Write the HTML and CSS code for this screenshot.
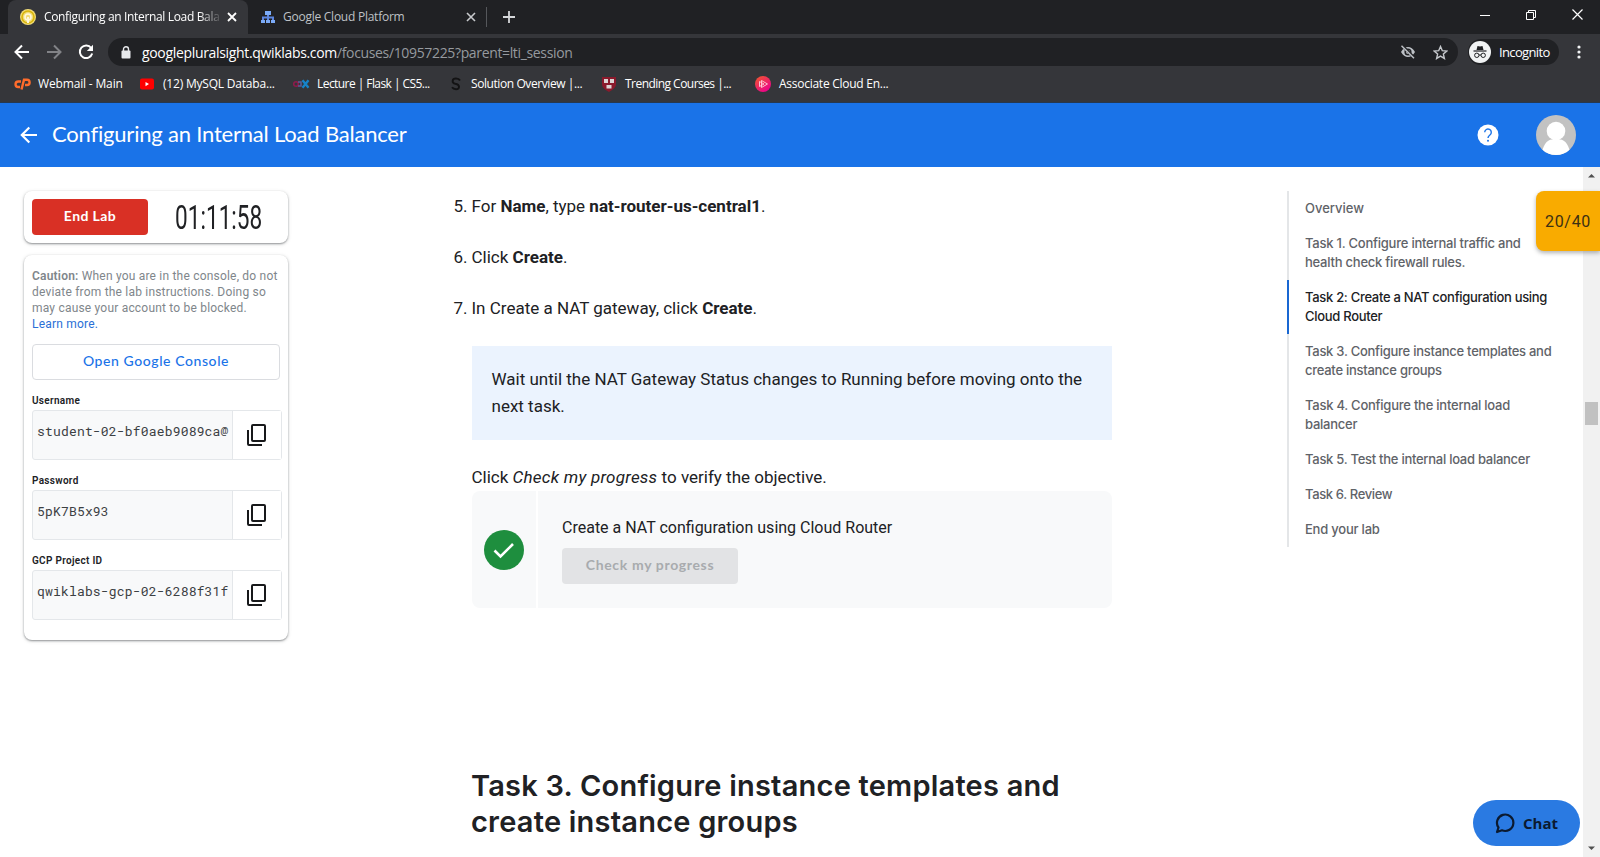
FILE: index.html
```html
<!DOCTYPE html>
<html lang="en">
<head>
<meta charset="utf-8">
<title>Configuring an Internal Load Balancer</title>
<link rel="stylesheet" href="styles.css">
</head>
<body>
<div class="tabs">
  <div class="tab tab-active">
    <svg class="fav" width="16" height="16" viewBox="0 0 16 16"><circle cx="8" cy="8" r="8" fill="#f2dc78"/><circle cx="8" cy="8" r="6" fill="none" stroke="#d8b50c" stroke-width="1.6"/><circle cx="8" cy="8" r="3" fill="none" stroke="#fff8dc" stroke-width="1.6"/><path d="M8 8v6" stroke="#fff8dc" stroke-width="2"/></svg>
    <span class="tab-title t1">Configuring an Internal Load Bala</span>
    <svg class="x1" width="10" height="10" viewBox="0 0 10 10"><path d="M1 1l8 8M9 1l-8 8" stroke="#fff" stroke-width="1.8"/></svg>
  </div>
  <div class="tab">
    <svg class="fav" width="16" height="16" viewBox="0 0 16 16"><path d="M5 2h6v4H5zM1 11h4v3H1zM6 11h4v3H6zM11 11h4v3h-4z" fill="#7baaf7"/><path d="M8 6v5M3 11V8.5h10V11" fill="none" stroke="#5c85de" stroke-width="2"/></svg>
    <span class="tab-title t2">Google Cloud Platform</span>
    <svg class="x2" width="10" height="10" viewBox="0 0 10 10"><path d="M1 1l8 8M9 1l-8 8" stroke="#c8cacd" stroke-width="1.6"/></svg>
  </div>
  <i class="tab-sep"></i>
  <svg class="plus" width="12" height="12" viewBox="0 0 12 12"><path d="M6 0v12M0 6h12" stroke="#d5d7da" stroke-width="1.8"/></svg>
  <div class="win">
    <svg width="10" height="10" viewBox="0 0 10 10"><path d="M0 5.5h10" stroke="#fff"/></svg>
    <svg width="10" height="10" viewBox="0 0 10 10"><path d="M.5 2.5h7v7h-7zM2.5 2.500V.5h7v7h-2" fill="none" stroke="#fff"/></svg>
    <svg width="11" height="11" viewBox="0 0 11 11"><path d="M.5.5l10 10M10.500.5l-10 10" stroke="#fff" stroke-width="1.2"/></svg>
  </div>
</div>
<div class="toolbar">
  <svg class="nav" width="16" height="16" viewBox="0 0 16 16"><path d="M15 8H2M8 1.500L1.500 8 8 14.500" fill="none" stroke="#fff" stroke-width="2"/></svg>
  <svg class="nav" width="16" height="16" viewBox="0 0 16 16"><path d="M1 8h13M8 1.500L14.500 8 8 14.500" fill="none" stroke="#828387" stroke-width="2"/></svg>
  <svg class="nav" width="16" height="16" viewBox="0 0 16 16"><path d="M13.200 4A6.300 6.300 0 1 0 14.200 9.500" fill="none" stroke="#fff" stroke-width="2"/><path d="M15 .8V7H8.800z" fill="#fff"/></svg>
  <div class="omnibox">
    <svg width="10" height="13" viewBox="0 0 10 13"><rect x=".5" y="4.500" width="9" height="8" rx="1" fill="#e8eaed"/><path d="M2.500 5V3.200a2.500 2.500 0 0 1 5 0V5" fill="none" stroke="#e8eaed" stroke-width="1.400"/></svg>
    <span class="url"><b>googlepluralsight.qwiklabs.com</b>/focuses/10957225?parent=lti_session</span>
    <svg width="16" height="14" viewBox="0 0 16 14"><path d="M1 7c2-3.600 4.300-5 7-5s5 1.400 7 5c-2 3.600-4.300 5-7 5s-5-1.400-7-5z" fill="#bdc1c6"/><circle cx="8" cy="7" r="3.600" fill="#202124"/><circle cx="8" cy="7" r="2" fill="#bdc1c6"/><path d="M1.500 0l13 13" stroke="#202124" stroke-width="2.800"/><path d="M1.500.8l12.500 12.500" stroke="#bdc1c6" stroke-width="1.500"/></svg>
    <svg class="star" width="15" height="15" viewBox="0 0 24 24"><path d="M12 2.500l2.900 6.600 7.100.7-5.400 4.700 1.600 7L12 17.800l-6.200 3.700 1.600-7L2 9.800l7.100-.7z" fill="none" stroke="#c4c7cb" stroke-width="2.300"/></svg>
  </div>
  <div class="incog">
    <svg width="22" height="22" viewBox="0 0 22 22"><circle cx="11" cy="11" r="11" fill="#f1f3f4"/><path d="M7.500 9l1-4 2.500.6L13.500 5l1 4z" fill="#202124"/><path d="M4.500 10h13" stroke="#202124" stroke-width="1.200"/><circle cx="7.800" cy="14.300" r="2.200" fill="none" stroke="#202124"/><circle cx="14.200" cy="14.300" r="2.200" fill="none" stroke="#202124"/><path d="M10 14h2" stroke="#202124"/></svg>
    <span>Incognito</span>
  </div>
  <svg class="dots" width="4" height="14" viewBox="0 0 4 14"><g fill="#f1f3f4"><circle cx="2" cy="2" r="1.600"/><circle cx="2" cy="7" r="1.600"/><circle cx="2" cy="12" r="1.600"/></g></svg>
</div>
<div class="bookmarks">
  <div class="bm b1"><svg width="17" height="12" viewBox="0 0 17 12"><path d="M7 3.500H4.300a2.700 2.700 0 0 0 0 5.500H6" fill="none" stroke="#ff6c2c" stroke-width="2.400"/><path d="M7.500 11.500L10 1.800h3a2.300 2.300 0 0 1 0 5.200h-2" fill="none" stroke="#ff6c2c" stroke-width="2.400"/></svg><span>Webmail - Main</span></div>
  <div class="bm b2"><svg width="14" height="12" viewBox="0 0 14 12"><rect width="14" height="11" y=".5" rx="2" fill="#f00"/><path d="M5.500 4v4.200L9 6.100z" fill="#fff"/></svg><span>(12) MySQL Databa...</span></div>
  <div class="bm b3"><svg width="17" height="10" viewBox="0 0 17 10"><circle cx="3" cy="5" r="2.300" fill="none" stroke="#8d1b4b" stroke-width="1.600"/><path d="M5 3h3v4H5" fill="none" stroke="#5a5f9a" stroke-width="1.500"/><path d="M9.500 1.200l6 7.500M15.500 1.200l-6 7.500" stroke="#1683c8" stroke-width="2.400"/></svg><span>Lecture | Flask | CS5...</span></div>
  <div class="bm b4"><svg width="12" height="14" viewBox="0 0 12 14"><path d="M10 3.500Q9 1.500 6 1.500C1.800 1.500 1.500 6 5.300 6.700c4.700.7 5 5.500.7 5.500Q3.300 12.200 2 10.300" fill="none" stroke="#131314" stroke-width="1.900"/></svg><span>Solution Overview |...</span></div>
  <div class="bm b5"><svg width="14" height="16" viewBox="0 0 14 16"><path d="M0 1h14v7c0 4-4 6-7 8-3-2-7-4-7-8z" fill="#8a1a2c"/><path d="M2 3h4v4H2zM8 3h4v4H8zM4.500 9h5v3.500h-5z" fill="#ddd5d5"/></svg><span>Trending Courses |...</span></div>
  <div class="bm b6"><svg width="16" height="16" viewBox="0 0 16 16"><defs><linearGradient id="ps" x2=".7" y2="1"><stop stop-color="#f15b2a"/><stop offset="1" stop-color="#ec008c"/></linearGradient></defs><circle cx="8" cy="8" r="8" fill="url(#ps)"/><path d="M6.500 4.500v7L12.500 8zM4.500 5.500v5L9 8z" fill="none" stroke="#ffd0dc" stroke-width=".9"/></svg><span>Associate Cloud En...</span></div>
</div>
<header class="appbar">
  <svg width="18" height="18" viewBox="0 0 18 18"><path d="M17 9H2M9.300 1.500L1.800 9l7.500 7.500" fill="none" stroke="#fff" stroke-width="2.200"/></svg>
  <h1>Configuring an Internal Load Balancer</h1>
  <svg class="help" width="22" height="22" viewBox="0 0 22 22"><circle cx="11" cy="11" r="10.500" fill="#fff"/><path d="M7.700 8.300a3.300 3.300 0 1 1 5.200 2.700c-1.200.9-1.900 1.500-1.900 3" fill="none" stroke="#1a73e8" stroke-width="1.400"/><circle cx="11" cy="16.700" r="1" fill="#1a73e8"/></svg>
  <svg width="40" height="40" viewBox="0 0 40 40"><defs><clipPath id="av"><circle cx="20" cy="20" r="20"/></clipPath></defs><g clip-path="url(#av)"><path d="M0 0h40v40H0z" fill="#c2c2c2"/><circle cx="20" cy="16" r="9.300" fill="#fff"/><path d="M6 40c0-9 5-15.500 10-15.500h8c5 0 10 6.500 10 15.500z" fill="#fff"/></g></svg>
</header>
<div class="page">
  <aside class="side">
    <div class="card timer"><button class="end">End Lab</button><div class="clock"><span>01:11:58</span></div></div>
    <div class="card creds">
      <p class="caution"><b>Caution:</b> When you are in the console, do not<br>deviate from the lab instructions. Doing so<br>may cause your account to be blocked.<br><a>Learn more.</a></p>
      <button class="open">Open Google Console</button>
      <label>Username</label>
      <div class="field"><span>student-02-bf0aeb9089ca@</span><i><svg width="20" height="22" viewBox="0 0 20 22"><rect x="5" y="1" width="13" height="16" rx="1" fill="none" stroke="#18191b" stroke-width="2"/><path d="M1 6v14q0 1 1 1h13" fill="none" stroke="#18191b" stroke-width="2"/></svg></i></div>
      <label>Password</label>
      <div class="field"><span>5pK7B5x93</span><i><svg width="20" height="22" viewBox="0 0 20 22"><rect x="5" y="1" width="13" height="16" rx="1" fill="none" stroke="#18191b" stroke-width="2"/><path d="M1 6v14q0 1 1 1h13" fill="none" stroke="#18191b" stroke-width="2"/></svg></i></div>
      <label>GCP Project ID</label>
      <div class="field"><span>qwiklabs-gcp-02-6288f31f</span><i><svg width="20" height="22" viewBox="0 0 20 22"><rect x="5" y="1" width="13" height="16" rx="1" fill="none" stroke="#18191b" stroke-width="2"/><path d="M1 6v14q0 1 1 1h13" fill="none" stroke="#18191b" stroke-width="2"/></svg></i></div>
    </div>
  </aside>
  <main class="doc">
    <div class="step"><span class="num">5.</span><p>For <b>Name</b>, type <b>nat-router-us-central1</b>.</p></div>
    <div class="step"><span class="num">6.</span><p>Click <b>Create</b>.</p></div>
    <div class="step"><span class="num">7.</span><p>In Create a NAT gateway, click <b>Create</b>.</p></div>
    <div class="note">Wait until the NAT Gateway Status changes to Running before moving onto the<br>next task.</div>
    <p class="verify">Click <em>Check my progress</em> to verify the objective.</p>
    <div class="progress">
      <div class="mark"><svg width="40" height="40" viewBox="0 0 40 40"><circle cx="20" cy="20" r="20" fill="#1e8e3e"/><path d="M10.500 20.500l6 6L29 14" fill="none" stroke="#fff" stroke-width="2.600"/></svg></div>
      <div class="goal"><p>Create a NAT configuration using Cloud Router</p><button class="check">Check my progress</button></div>
    </div>
    <h2>Task 3. Configure instance templates and<br>create instance groups</h2>
  </main>
  <nav class="toc">
    <a><span class="c1">Overview</span></a>
    <a><span class="c2">Task 1. Configure internal traffic and<br>health check firewall rules.</span></a>
    <a class="on"><span class="c3">Task 2: Create a NAT configuration using<br>Cloud Router</span></a>
    <a><span class="c4">Task 3. Configure instance templates and<br>create instance groups</span></a>
    <a><span class="c5">Task 4. Configure the internal load<br>balancer</span></a>
    <a><span class="c6">Task 5. Test the internal load balancer</span></a>
    <a><span class="c7">Task 6. Review</span></a>
    <a><span class="c8">End your lab</span></a>
  </nav>
  <div class="scroll">
    <svg width="9" height="5" viewBox="0 0 9 5"><path d="M1 4.500L4.500 1 8 4.500z" fill="#505050"/></svg>
    <i class="thumb"></i>
    <svg class="down" width="9" height="5" viewBox="0 0 9 5"><path d="M1 .5L4.500 4 8 .5z" fill="#505050"/></svg>
  </div>
  <div class="score">20/40</div>
  <button class="chat"><svg width="20" height="21" viewBox="0 0 20 21"><path d="M3.500 14.500A8.200 8.200 0 1 1 7 17.300L2 19z" fill="none" stroke="#0b1a30" stroke-width="2.200" stroke-linejoin="round"/></svg><span>Chat</span></button>
</div>
</body>
</html>
```
FILE: styles.css
```css
* { box-sizing: border-box; }
body { margin: 0; width: 1600px; height: 857px; overflow: hidden; background: #fff; font-family: Roboto, sans-serif; color: #202124; display: flex; flex-direction: column; }
p, h1, h2 { margin: 0; }
svg { display: block; flex: none; }
button { border: 0; padding: 0; font-family: inherit; }
span { white-space: nowrap; }

.tabs, .toolbar, .bookmarks { font-family: "Open Sans", sans-serif; color: #fff; display: flex; align-items: center; flex: none; }
.tabs { height: 34px; background: #202124; padding-left: 8px; }
.tab { height: 34px; display: flex; align-items: center; width: 238px; padding-left: 12px; font-size: 12px; color: #bfc2c6; }
.tab-active { width: 240px; background: #35363a; border-radius: 8px 8px 0 0; color: #fff; }
.tab-title { margin-left: 8px; padding-bottom: 1px; flex: none; }
.t1 { width: 180px; letter-spacing: -0.34px; -webkit-mask-image: linear-gradient(90deg, #000 155px, transparent 179px); mask-image: linear-gradient(90deg, #000 155px, transparent 179px); }
.t2 { width: 178px; letter-spacing: -0.25px; margin-left: 7px; }
.x1 { margin-left: 3px; }
.x2 { margin-left: 5px; }
.tab-sep { width: 1px; height: 20px; background: #55575b; }
.plus { margin-left: 16px; }
.win { margin: -5px 17px 0 auto; display: flex; align-items: center; gap: 36px; }

.toolbar { height: 36px; background: #35363a; padding-left: 14px; }
.nav { margin-right: 16px; }
.omnibox { flex: none; width: 1350px; height: 28px; margin-left: -2px; border-radius: 14px; background: #202124; display: flex; align-items: center; padding: 0 10px 0 13px; }
.url { margin-left: 11px; font-size: 14px; letter-spacing: -0.35px; color: #969a9f; flex: 1; }
.url b { font-weight: 400; letter-spacing: -0.33px; color: #fff; }
.star { margin-left: 17px; }
.incog { margin-left: 10px; width: 91px; height: 26px; border-radius: 13px; background: #202124; display: flex; align-items: center; padding: 0 0 1px 1px; font-size: 13px; letter-spacing: -0.65px; gap: 8px; }
.dots { margin-left: 18px; }

.bookmarks { height: 33px; background: #35363a; border-bottom: 1px solid #26384f; padding: 0 0 5px 14px; font-size: 12px; }
.bm { display: flex; align-items: center; height: 18px; }
.b1 { width: 126px; gap: 7px; letter-spacing: -.16px; }
.b2 { width: 153px; gap: 9px; letter-spacing: -.2px; }
.b3 { width: 157px; gap: 7px; letter-spacing: -.56px; }
.b4 { width: 152px; gap: 9px; letter-spacing: -.42px; }
.b5 { width: 153px; gap: 9px; letter-spacing: -.54px; }
.b6 { gap: 8px; letter-spacing: -.26px; }

.appbar { flex: none; height: 64px; background: #1a73e8; color: #fff; display: flex; align-items: center; padding: 0 24px 0 20px; }
.appbar h1 { flex: 1; margin-left: 14px; padding-bottom: 2px; font: 400 22px/28px Lato, sans-serif; letter-spacing: -0.2px; }
.help { margin-right: 37px; }

.page { flex: 1; position: relative; display: flex; align-items: flex-start; min-height: 0; }
.side { width: 264px; margin: 24px 0 0 24px; display: flex; flex-direction: column; gap: 12px; }
.card { border-radius: 8px; background: #fff; box-shadow: 0 1px 2px rgba(60,64,67,.5), 0 1px 4px rgba(60,64,67,.15); }
.timer { height: 52px; padding: 8px; display: flex; }
.end { flex: none; width: 116px; height: 36px; padding-bottom: 3px; border-radius: 4px; background: #d93025; color: #fff; font: 700 14px Lato, sans-serif; letter-spacing: .4px; }
.clock { flex: none; width: 132px; display: flex; justify-content: center; align-items: center; padding: 1px 0 0 9px; }
.clock span { font-size: 33px; line-height: 36px; transform: scaleX(.685); }
.creds { height: 385px; padding: 13px 6px 0 8px; display: flex; flex-direction: column; }
.caution { font-size: 12px; line-height: 16px; letter-spacing: .2px; color: #80868b; white-space: nowrap; }
.caution b { font-weight: 600; }
.caution a { color: #2a6fd6; }
.open { margin-top: 12px; width: 248px; height: 36px; padding-bottom: 3px; border: 1px solid #dadce0; border-radius: 4px; background: #fff; color: #1a73e8; font: 500 14px Lato, sans-serif; letter-spacing: .58px; }
label { font-size: 10px; font-weight: 600; line-height: 12px; letter-spacing: .3px; margin: 15px 0 3px; }
.field { height: 50px; border: 1px solid #e4e7ea; border-radius: 3px; display: flex; background: #f8f9fa; }
.field span { flex: none; width: 199px; padding: 12px 0 0 4px; font: 13px/17px "Roboto Mono", "Liberation Mono", monospace; letter-spacing: .18px; color: #3c4043; }
.field i { flex: 1; background: #fff; border-left: 1px solid #e4e7ea; display: flex; align-items: center; justify-content: center; padding-right: 1px; }

.doc { width: 658px; margin: 26px 0 0 166px; font-size: 17px; line-height: 27px; }
.doc b { font-weight: 700; }
.doc em { letter-spacing: .24px; }
.step { display: flex; margin-bottom: 24px; }
.num { width: 18px; margin-left: -.5px; }
.note { margin: 2px 0 0 18px; width: 640px; height: 94px; background: #ebf3fe; padding: 20px 0 0 19.5px; white-space: nowrap; }
.verify { margin: 24px 0 0 17.5px; white-space: nowrap; }
.progress { margin-left: 18px; width: 640px; height: 117px; display: flex; gap: 2px; border-radius: 8px; overflow: hidden; }
.mark { width: 64px; background: #f8f9fa; display: flex; align-items: center; justify-content: center; }
.goal { flex: 1; background: #f8f9fa; padding: 25px 0 0 24px; font-size: 16px; line-height: 24px; }
.check { display: block; margin-top: 8px; width: 176px; height: 36px; padding-bottom: 3px; border-radius: 4px; background: #e2e3e5; color: #a8abae; font: 700 14px Lato, sans-serif; letter-spacing: .65px; }
.doc h2 { margin: 160px 0 0 17px; font: 600 29px/36px Inter, sans-serif; letter-spacing: .22px; white-space: nowrap; }

.toc { margin: 24px 0 0 175px; width: 280px; display: flex; flex-direction: column; }
.toc a { display: block; border-left: 2px solid #e4e6e8; padding: 8px 0 8px 16px; font: 500 13px/19px Inter, sans-serif; color: #5f6368; }
.toc a.on { border-color: #1967d2; color: #202124; }
.toc span { display: block; letter-spacing: -.27px; }
.toc .c1 { letter-spacing: 0; }
.toc .c2 { letter-spacing: -.23px; }
.toc .c3 { letter-spacing: -.3px; }
.toc .c5 { letter-spacing: -.24px; }
.toc .c7 { letter-spacing: -.36px; }
.toc .c8 { letter-spacing: -.22px; }

.scroll { position: absolute; right: 0; top: 0; bottom: 0; width: 17px; background: #f1f1f1; display: flex; flex-direction: column; align-items: center; padding: 6px 0; }
.thumb { width: 13px; height: 23px; background: #c1c1c1; margin-top: 224px; }
.down { margin-top: auto; }
.score { position: absolute; right: 0; top: 24px; width: 64px; height: 60px; border-radius: 8px 0 0 8px; background: #f9ab00; box-shadow: 0 2px 4px rgba(60,64,67,.4); font-size: 16px; line-height: 61px; text-align: center; letter-spacing: .7px; color: #3c3013; }
.chat { position: absolute; left: 1473px; top: 633px; width: 107px; height: 46px; border-radius: 23px; background: #2a7ae2; display: flex; align-items: center; padding-left: 22px; gap: 8px; font: 700 15px "Open Sans", sans-serif; color: #0b1a30; }
```
